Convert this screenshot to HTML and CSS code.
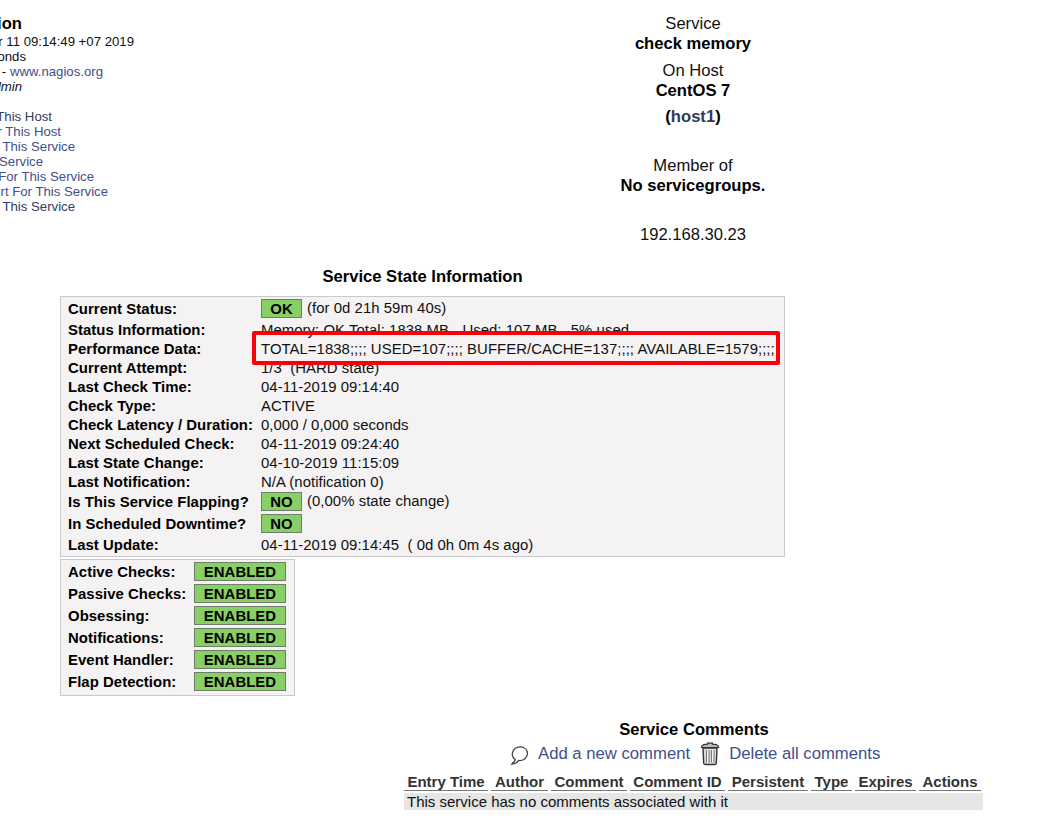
FILE: index.html
```html
<!DOCTYPE html>
<html lang="en">
<head>
<meta charset="utf-8">
<title>Service State</title>
<link rel="stylesheet" href="styles.css">
</head>
<body>
<header class="header">
  <div class="side">
    <div class="line line-title w22">ion</div>
    <div class="line w133">r 11 09:14:49 +07 2019</div>
    <div class="line w26">onds</div>
    <div class="line w103">-&nbsp;<a href="#">www.nagios.org</a></div>
    <div class="line w22"><i>dmin</i></div>
    <nav class="links">
      <a href="#" class="line visited w52">This Host</a>
      <a href="#" class="line w61">r This Host</a>
      <a href="#" class="line w75">This Service</a>
      <a href="#" class="line w43">Service</a>
      <a href="#" class="line w94">For This Service</a>
      <a href="#" class="line w108">rt For This Service</a>
      <a href="#" class="line visited w75">This Service</a>
    </nav>
  </div>
  <div class="subject">
    <div>Service</div>
    <b>check memory</b>
    <div class="gap-s">On Host</div>
    <b>CentOS 7</b>
    <b class="gap-s host">(<a href="#" class="visited">host1</a>)</b>
    <div class="gap-l">Member of</div>
    <b>No servicegroups.</b>
    <div class="gap-l">192.168.30.23</div>
  </div>
</header>
<main>
  <h2 class="state-title">Service State Information</h2>
  <section class="panel state">
    <div class="row tall"><b>Current Status:</b><span><em class="badge small">OK</em><span class="after">(for 0d 21h 59m 40s)</span></span></div>
    <div class="row"><b>Status Information:</b><span>Memory: OK Total: 1838 MB <i class="dash">-</i> Used: 107 MB <i class="dash">-</i> 5% used</span></div>
    <div class="row"><b>Performance Data:</b><span>TOTAL=1838;;;; USED=107;;;; BUFFER/CACHE=137;;;; AVAILABLE=1579;;;;</span></div>
    <div class="row"><b>Current Attempt:</b><span>1/3&nbsp; (HARD state)</span></div>
    <div class="row"><b>Last Check Time:</b><span>04-11-2019 09:14:40</span></div>
    <div class="row"><b>Check Type:</b><span>ACTIVE</span></div>
    <div class="row"><b>Check Latency / Duration:</b><span>0,000 / 0,000 seconds</span></div>
    <div class="row"><b>Next Scheduled Check:</b><span>04-11-2019 09:24:40</span></div>
    <div class="row"><b>Last State Change:</b><span>04-10-2019 11:15:09</span></div>
    <div class="row"><b>Last Notification:</b><span>N/A (notification 0)</span></div>
    <div class="row tall"><b>Is This Service Flapping?</b><span><em class="badge small">NO</em><span class="after">(0,00% state change)</span></span></div>
    <div class="row tall"><b>In Scheduled Downtime?</b><span><em class="badge small">NO</em></span></div>
    <div class="row"><b>Last Update:</b><span>04-11-2019 09:14:45&nbsp; ( 0d 0h 0m 4s ago)</span></div>
    <div class="highlight"></div>
  </section>
  <section class="panel checks">
    <div class="row tall"><b>Active Checks:</b><em class="badge wide">ENABLED</em></div>
    <div class="row tall"><b>Passive Checks:</b><em class="badge wide">ENABLED</em></div>
    <div class="row tall"><b>Obsessing:</b><em class="badge wide">ENABLED</em></div>
    <div class="row tall"><b>Notifications:</b><em class="badge wide">ENABLED</em></div>
    <div class="row tall"><b>Event Handler:</b><em class="badge wide">ENABLED</em></div>
    <div class="row tall"><b>Flap Detection:</b><em class="badge wide">ENABLED</em></div>
  </section>
  <section class="comments">
    <h2 class="comments-title">Service Comments</h2>
    <div class="actions">
      <svg class="icon bubble" width="20" height="22" viewBox="0 0 20 22"><path d="M5.200 14.600C2 12.500 1.500 8.500 3.500 5.400C5.600 2.200 10 1.100 13.600 2.500C17.200 4 18.300 8 16.700 11.300C15 14.700 11.600 15.900 8.400 15.500C7.300 17.800 5 19 1.800 19.200L3 17.600C4.400 17 5 16 5.200 14.600Z" fill="#fff" stroke="#444" stroke-width="1.300"/></svg>
      <a href="#" class="add">Add a new comment</a>
      <svg class="icon bin" width="20" height="24" viewBox="0 0 20 24"><path d="M3 6L3.700 21.300Q4 22.500 5.500 22.500H14.500Q16 22.500 16.300 21.300L17 6Z" fill="#ddd" stroke="#333" stroke-width="1.400"/><path d="M6.500 8V20.500M9 8V20.500M11.500 8V20.500M14 8V20.500" stroke="#777" stroke-width="1.100"/><path d="M7.700 8V20M12.700 8V20" stroke="#fff" stroke-width=".9"/><path d="M1.500 5.500Q1.500 3.500 3.500 2.700L7.500 2.200V1.200H12.500V2.200L16.500 2.700Q18.500 3.500 18.500 5.500Z" fill="#bbb" stroke="#333" stroke-width="1.200"/></svg>
      <a href="#">Delete all comments</a>
    </div>
    <div class="thead">
      <b>Entry Time</b><b>Author</b><b>Comment</b><b>Comment ID</b><b>Persistent</b><b>Type</b><b>Expires</b><b>Actions</b>
    </div>
    <div class="empty">This service has no comments associated with it</div>
  </section>
</main>
</body>
</html>
```

FILE: styles.css
```css
* { box-sizing: border-box; }
body {
  margin: 0;
  width: 1053px;
  height: 838px;
  overflow: hidden;
  background: #fff;
  color: #111;
  font-family: "Liberation Sans", Arial, sans-serif;
  white-space: nowrap;
}
a { color: #414f8a; text-decoration: none; }
a.visited { color: #303a5c; }
b, h2 { color: #000; }
h2 { margin: 0; font-size: 16.6px; line-height: 20px; text-align: center; }

.header { display: flex; height: 267px; }
.side { width: 333px; padding-top: 13px; font-size: 13.2px; overflow: hidden; }
.line { display: flex; justify-content: flex-end; height: 15px; line-height: 15px; }
.line-title { height: 21px; line-height: 21px; font-size: 16.6px; font-weight: bold; color: #000; }
.links { padding-top: 15px; }
.w22 { width: 22px; }
.w26 { width: 26px; }
.w43 { width: 43px; }
.w52 { width: 52px; }
.w61 { width: 61px; }
.w75 { width: 75px; }
.w94 { width: 94px; }
.w103 { width: 103px; }
.w108 { width: 108px; }
.w133 { width: 134px; }

.subject {
  display: flex;
  flex-direction: column;
  width: 720px;
  padding-top: 14px;
  font-size: 16.6px;
  line-height: 20px;
  text-align: center;
}
.gap-s { margin-top: 7px; }
.subject .host { margin-top: 6px; }
.gap-l { margin-top: 29px; }

.state-title { width: 725px; margin: 0 0 9px 60px; }
.panel {
  margin-left: 60px;
  padding: 1px 7px;
  border: 1px solid #c9c9c9;
  background: #f4f2f2;
  font-size: 14.9px;
  letter-spacing: 0.05px;
}
.state { position: relative; width: 725px; height: 261px; }
.row { display: grid; grid-template-columns: 193px 1fr; height: 19px; line-height: 21px; }
.tall { height: 22px; line-height: 22px; }
.row > span { white-space: pre; }
.tall > span { display: flex; }
.dash { position: relative; top: 1px; font-style: normal; }
.badge {
  display: block;
  height: 19px;
  margin-top: 1px;
  border: 1px solid #6f7f6a;
  background: #88d066;
  color: #000;
  font-style: normal;
  font-weight: bold;
  line-height: 18px;
  text-align: center;
}
.small { width: 41px; }
.wide { width: 92px; }
.after { margin-left: 5px; line-height: 20px; }
.highlight {
  position: absolute;
  left: 191px;
  top: 34px;
  width: 528px;
  height: 34px;
  border: 4px solid #f80008;
  border-radius: 2px;
}
.checks { width: 235px; height: 137px; margin-top: 2px; }
.checks .row { grid-template-columns: 126px 1fr; }

.comments { width: 579px; margin: 24px 0 0 404px; }
.comments-title { padding-left: 1px; }
.actions { display: flex; align-items: center; height: 28px; padding-left: 106px; font-size: 16.7px; }
.icon { flex: none; margin-right: 8px; }
.bubble { margin-top: 3px; }
.bin { margin-right: 9px; }
.add { margin-right: 10px; }
.thead {
  display: grid;
  grid-template-columns: 84px 57px 76px 95px 80px 41px 61px 62px;
  gap: 3px;
  height: 25px;
  font-size: 15px;
  text-align: center;
}
.thead b { height: 23px; padding-top: 5px; border-bottom: 1px solid #777; color: #333; line-height: 18px; }
.empty { height: 17px; padding-left: 3px; background: #e6e6e6; font-size: 15px; line-height: 17px; }
```
